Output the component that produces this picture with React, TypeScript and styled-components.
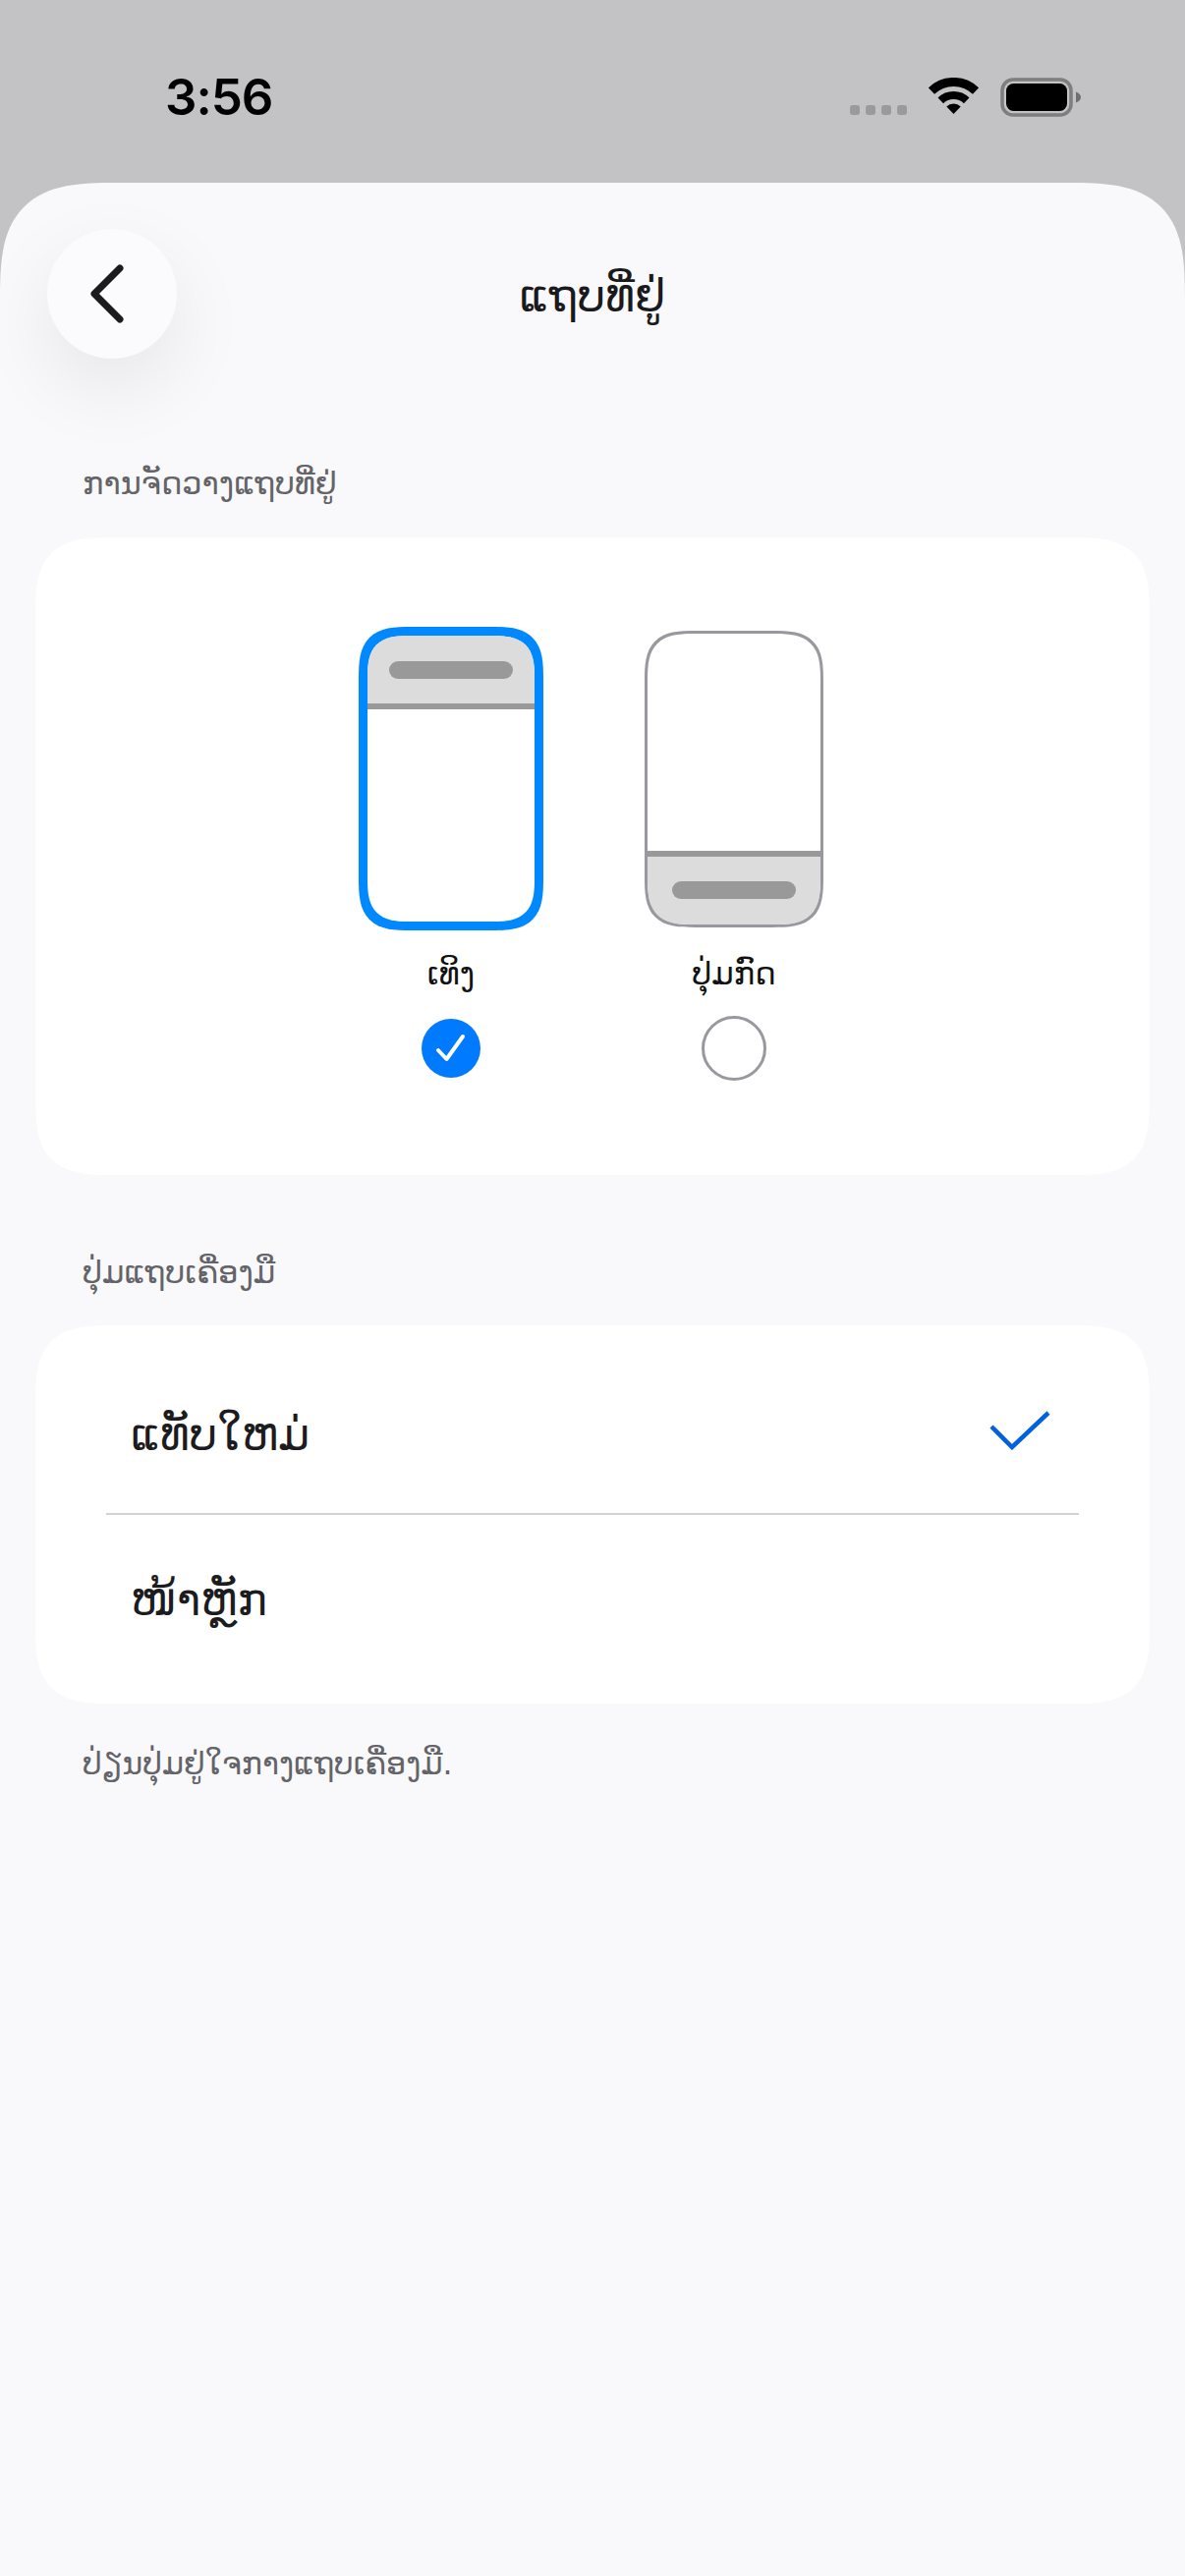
import React from 'react';
import styled, { createGlobalStyle } from 'styled-components';

const GlobalStyle = createGlobalStyle`
  html, body {
    margin: 0;
    padding: 0;
    background: #f9f9fb;
  }
  * {
    box-sizing: border-box;
  }
`;

const laoFont = `"DejaVu Sans", "Noto Sans", sans-serif`;

const Screen = styled.div`
  width: 1206px;
  height: 2622px;
  display: flex;
  flex-direction: column;
  overflow: hidden;
  background: linear-gradient(180deg, #c3c3c5 0%, #c1c1c3 50%, #bababc 100%);
`;

const StatusBar = styled.div`
  height: 186px;
  flex: none;
  display: flex;
  justify-content: space-between;
  align-items: flex-start;
  padding: 73px 104px 0 168px;
`;

const Clock = styled.div`
  font-family: Inter, "Liberation Sans", sans-serif;
  font-size: 51px;
  line-height: 52px;
  font-weight: 600;
  color: #000;
  letter-spacing: -1px;
`;

const StatusIcons = styled.div`
  display: flex;
  align-items: flex-start;
  padding-top: 6px;
`;

const SignalDots = styled.div`
  display: flex;
  gap: 6px;
  margin: 28px 22px 0 0;
`;

const SignalDot = styled.span`
  width: 10px;
  height: 10px;
  border-radius: 3px;
  background: #9a9a9c;
`;

const Sheet = styled.div`
  flex: 1;
  background: #f9f9fb;
  border-radius: 120px 120px 0 0;
  corner-shape: superellipse(1.6);
  padding-top: 47px;
`;

const Header = styled.div`
  display: grid;
  grid-template-columns: 132px 1fr 132px;
  align-items: center;
  padding: 0 48px;
`;

const BackButton = styled.button`
  width: 132px;
  height: 132px;
  border: none;
  border-radius: 50%;
  padding: 0 10px 0 0;
  background: #fbfbfd;
  box-shadow: 0 30px 80px rgba(0, 0, 0, 0.08);
  display: flex;
  align-items: center;
  justify-content: center;
`;

const Title = styled.h1`
  margin: 0;
  padding-top: 5px;
  text-align: center;
  font-family: ${laoFont};
  font-size: 45.5px;
  line-height: 60px;
  font-weight: 400;
  color: #1a1a1c;
`;

const SectionLabel = styled.div<{ $top: number }>`
  margin-top: ${(p) => p.$top}px;
  padding-left: 84px;
  font-family: ${laoFont};
  font-size: 32px;
  line-height: 44px;
  color: #636368;
`;

const Card = styled.div`
  margin: 0 36px;
  background: #fff;
  border-radius: 80px;
  corner-shape: superellipse(1.6);
`;

const PlacementCard = styled(Card)`
  margin-top: 33px;
  height: 649px;
  padding-top: 91px;
  display: flex;
  justify-content: center;
`;

const Option = styled.div`
  width: 288px;
  display: flex;
  flex-direction: column;
  align-items: center;
`;

const PhoneSlot = styled.div`
  height: 309px;
  display: flex;
  align-items: center;
`;

const Phone = styled.div<{ $selected: boolean }>`
  width: ${(p) => (p.$selected ? 188 : 182)}px;
  height: ${(p) => (p.$selected ? 309 : 302)}px;
  border: ${(p) => (p.$selected ? '9px solid #0088ff' : '3px solid #98989e')};
  border-radius: ${(p) => (p.$selected ? 54 : 52)}px;
  corner-shape: superellipse(1.6);
  background: #fff;
  overflow: hidden;
  display: flex;
  flex-direction: column;
  justify-content: ${(p) => (p.$selected ? 'flex-start' : 'flex-end')};
`;

const AddressBar = styled.div<{ $bottom: boolean }>`
  height: 75px;
  flex: none;
  background: #dcdcdc;
  display: flex;
  align-items: center;
  justify-content: center;
  ${(p) => (p.$bottom ? 'border-top: 6px solid #999;' : 'border-bottom: 6px solid #999;')}
`;

const BarPill = styled.div`
  width: 126px;
  height: 18px;
  border-radius: 9px;
  background: #999;
`;

const OptionLabel = styled.div`
  margin-top: 19px;
  height: 50px;
  font-family: ${laoFont};
  font-size: 32px;
  line-height: 50px;
  color: #111;
`;

const RadioSlot = styled.div`
  margin-top: 18px;
  height: 66px;
  display: flex;
  align-items: center;
  justify-content: center;
`;

const RadioOn = styled.div`
  width: 60px;
  height: 60px;
  border-radius: 50%;
  background: #007aff;
  display: flex;
  align-items: center;
  justify-content: center;
`;

const RadioOff = styled.div`
  width: 66px;
  height: 66px;
  border-radius: 50%;
  border: 3px solid #98989f;
`;

const ToolbarCard = styled(Card)`
  margin-top: 32px;
  height: 385px;
  padding: 0 72px;
  display: flex;
  flex-direction: column;
`;

const Row = styled.div<{ $divider?: boolean }>`
  display: flex;
  align-items: center;
  justify-content: space-between;
  ${(p) =>
    p.$divider
      ? 'flex: none; height: 193px; border-bottom: 2px solid #d2d2d4; padding-top: 23px;'
      : 'flex: 1; padding-bottom: 28px;'}
`;

const RowText = styled.span`
  padding: 10px 0 0 25px;
  font-family: ${laoFont};
  font-size: 45.5px;
  line-height: 60px;
  font-weight: 400;
  color: #1c1c1e;
`;

const TickWrap = styled.span`
  display: flex;
  margin-right: 29px;
`;

const FooterNote = styled.div`
  margin-top: 39px;
  padding-left: 84px;
  font-family: ${laoFont};
  font-size: 31.5px;
  line-height: 44px;
  color: #636368;
`;

const WifiIcon = () => (
  <svg width="51" height="37" viewBox="0 0 51 37">
    <path d="M2.9 13.6A32.5 32.5 0 0 1 48.1 13.6" fill="none" stroke="#000" strokeWidth="9" />
    <path d="M12.3 23.3A19 19 0 0 1 38.7 23.3" fill="none" stroke="#000" strokeWidth="8" />
    <path d="M25.5 37L18.3 29.6A10 10 0 0 1 32.7 29.6Z" fill="#000" />
  </svg>
);

const BatteryIcon = () => (
  <svg width="84" height="40" viewBox="0 0 84 40" style={{ marginLeft: 22 }}>
    <rect x="2" y="2" width="70" height="36" rx="11" fill="none" stroke="#7e7e7e" strokeWidth="3.5" />
    <rect x="6" y="6" width="62" height="28" rx="7.5" fill="#000" />
    <path d="M77 14.5C80 15.5 82 17.5 82 20C82 22.5 80 24.5 77 25.5Z" fill="#6f6f6f" />
  </svg>
);

const BackChevron = () => (
  <svg width="36" height="60" viewBox="0 0 36 60">
    <path d="M31 4L5 30L31 56" fill="none" stroke="#1c1c1e" strokeWidth="7" strokeLinecap="round" strokeLinejoin="round" />
  </svg>
);

export default function App() {
  return (
    <Screen>
      <GlobalStyle />
      <StatusBar>
        <Clock>3:56</Clock>
        <StatusIcons>
          <SignalDots>
            <SignalDot />
            <SignalDot />
            <SignalDot />
            <SignalDot />
          </SignalDots>
          <WifiIcon />
          <BatteryIcon />
        </StatusIcons>
      </StatusBar>
      <Sheet>
        <Header>
          <BackButton>
            <BackChevron />
          </BackButton>
          <Title>ແຖບທີ່ຢູ່</Title>
        </Header>
        <SectionLabel $top={105}>ການຈັດວາງແຖບທີ່ຢູ່</SectionLabel>
        <PlacementCard>
          <Option>
            <PhoneSlot>
              <Phone $selected>
                <AddressBar $bottom={false}>
                  <BarPill />
                </AddressBar>
              </Phone>
            </PhoneSlot>
            <OptionLabel>ເທິງ</OptionLabel>
            <RadioSlot>
              <RadioOn>
                <svg width="32" height="30" viewBox="0 0 32 30">
                  <path d="M3 17L11.5 26L28 3" fill="none" stroke="#fff" strokeWidth="4" strokeLinecap="round" strokeLinejoin="round" />
                </svg>
              </RadioOn>
            </RadioSlot>
          </Option>
          <Option>
            <PhoneSlot>
              <Phone $selected={false}>
                <AddressBar $bottom>
                  <BarPill />
                </AddressBar>
              </Phone>
            </PhoneSlot>
            <OptionLabel>ປຸ່ມກົດ</OptionLabel>
            <RadioSlot>
              <RadioOff />
            </RadioSlot>
          </Option>
        </PlacementCard>
        <SectionLabel $top={77}>ປຸ່ມແຖບເຄື່ອງມື</SectionLabel>
        <ToolbarCard>
          <Row $divider>
            <RowText>ແທັບໃຫມ່</RowText>
            <TickWrap>
              <svg width="62" height="40" viewBox="0 0 62 40">
                <path d="M2 16L23 37L60 2" fill="none" stroke="#0060df" strokeWidth="4.5" />
              </svg>
            </TickWrap>
          </Row>
          <Row>
            <RowText>ໜ້າຫຼັກ</RowText>
          </Row>
        </ToolbarCard>
        <FooterNote>ປ່ຽນປຸ່ມຢູ່ໃຈກາງແຖບເຄື່ອງມື.</FooterNote>
      </Sheet>
    </Screen>
  );
}
